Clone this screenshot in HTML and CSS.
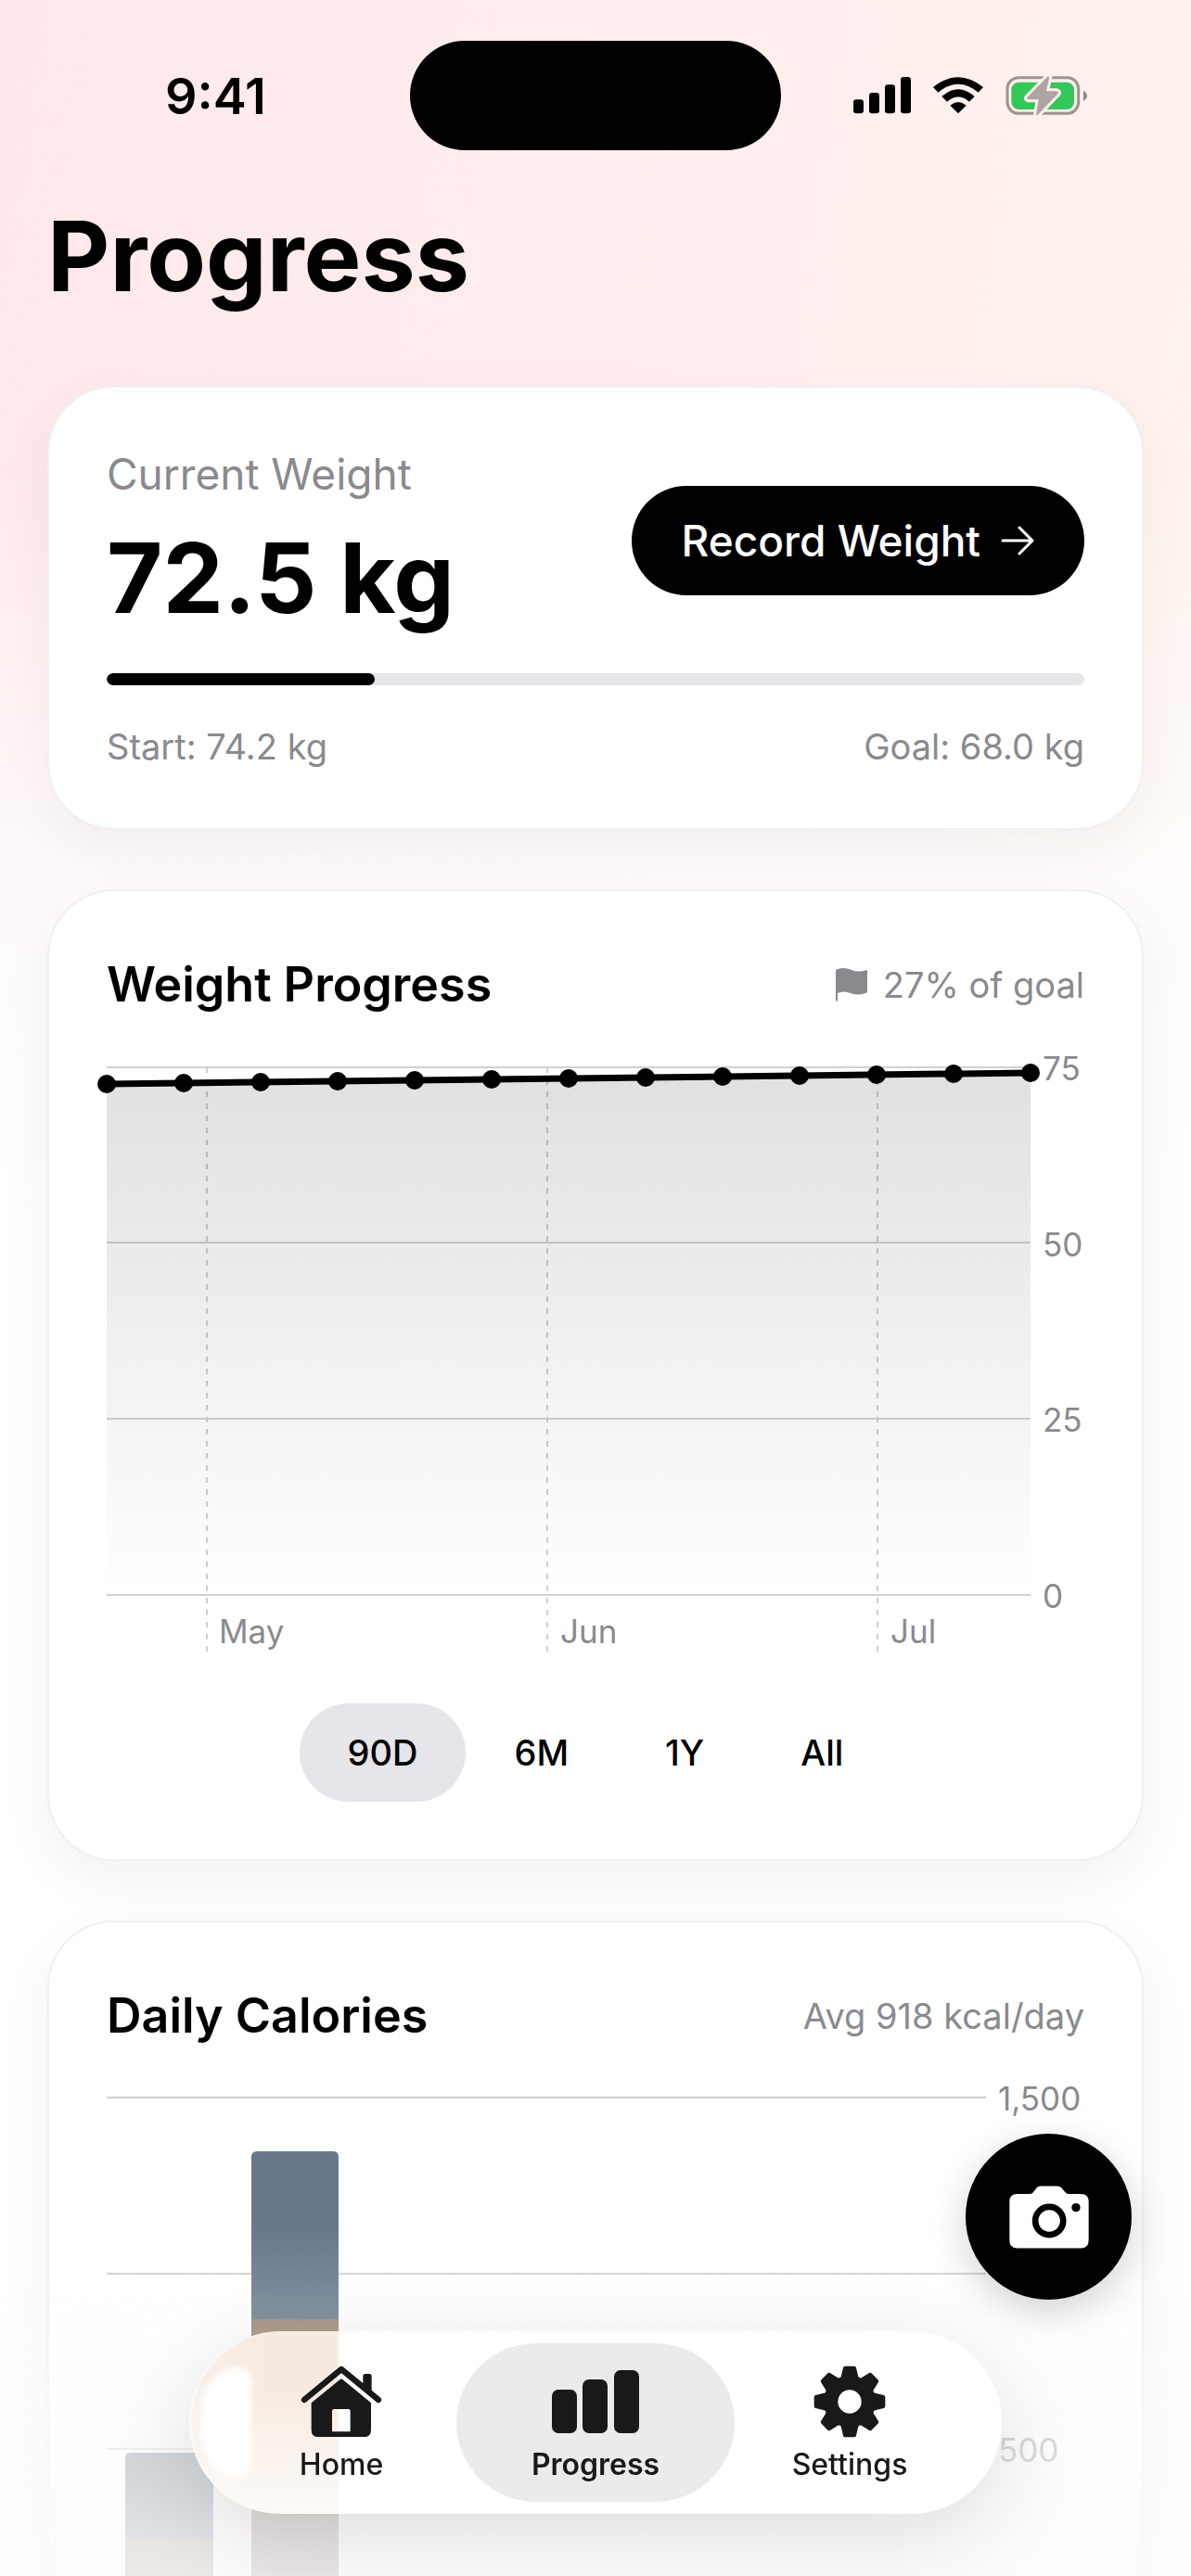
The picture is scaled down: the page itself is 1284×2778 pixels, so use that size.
FILE: index.html
```html
<!DOCTYPE html>
<html lang="en">
<head>
    <meta charset="UTF-8">
    <meta name="viewport" content="width=device-width, initial-scale=1.0">
    <title>Progress</title>
    <link rel="stylesheet" href="styles.css">
</head>
<body>
    <div class="screen">
        <div class="status-bar">
            <span class="status-time">9:41</span>
            <span class="island"></span>
            <div class="status-icons" aria-hidden="true">
                <svg width="62" height="40" viewBox="0 0 186 120">
                    <rect x="0" y="73" width="33" height="45" rx="10"/>
                    <rect x="51" y="51" width="33" height="67" rx="10"/>
                    <rect x="102" y="25" width="33" height="93" rx="10"/>
                    <rect x="153" y="0" width="33" height="118" rx="10"/>
                </svg>
                <svg width="54" height="40" viewBox="0 0 162 120">
                    <path d="M0 33 Q81 -32 162 33 L146 50 Q81 -4 16 50 Z"/>
                    <path d="M28 63 Q81 16 134 63 L117 80 Q81 49 45 80 Z"/>
                    <path d="M55 92 Q81 70 107 92 L81 118 Z"/>
                </svg>
                <svg width="88" height="44" viewBox="0 0 264 132">
                    <rect x="6" y="8" width="230" height="116" rx="36" fill="none" stroke="#a0948f" stroke-width="9"/>
                    <rect x="19" y="23" width="203" height="88" rx="24" fill="#34c759"/>
                    <path d="M252 50 Q264 58 264 67 Q264 76 252 84 Z" fill="#8f8683"/>
                    <path d="M137 4 L70 72 Q67 78 74 79 L107 79 L99 129 L103 130 L170 60 Q173 54 166 52 L132 52 L142 6 Z" fill="#aea5a2" stroke="#fff1ec" stroke-width="18" stroke-linejoin="round"/>
                    <path d="M137 4 L70 72 Q67 78 74 79 L107 79 L99 129 L103 130 L170 60 Q173 54 166 52 L132 52 L142 6 Z" fill="#aea5a2"/>
                </svg>
            </div>
        </div>

        <main class="content">
            <h1 class="page-title">Progress</h1>

            <section class="card">
                <div class="weight-row">
                    <div class="weight-info">
                        <span class="weight-label">Current Weight</span>
                        <strong class="weight-value">72.5 kg</strong>
                    </div>
                    <button type="button" class="record-btn">
                        Record Weight
                        <svg width="36" height="32" viewBox="0 0 36 32" aria-hidden="true">
                            <path d="M2 16 H34 M20 2 L34 16 L20 30" fill="none" stroke="#fff" stroke-width="3" stroke-linecap="round" stroke-linejoin="round"/>
                        </svg>
                    </button>
                </div>
                <div class="goal-bar">
                    <div class="goal-fill" style="width: 27.4%"></div>
                </div>
                <div class="goal-range">
                    <span>Start: 74.2 kg</span>
                    <span>Goal: 68.0 kg</span>
                </div>
            </section>

            <section class="card">
                <div class="card-header">
                    <h2 class="card-title">Weight Progress</h2>
                    <span class="card-note">
                        <svg width="36" height="38" viewBox="0 0 36 38" aria-hidden="true">
                            <path d="M1 3 Q9 -1 18 3 Q25 6 34 3 Q35 3 35 5 V26 Q35 28 33 28 Q25 31 17 28 Q9 25 3 28 V36 Q2 38 1 36 Z" fill="#8a8a8e"/>
                        </svg>
                        27% of goal
                    </span>
                </div>
                <svg class="chart" viewBox="0 0 1054 644" role="img" aria-label="Weight over the last 90 days">
                    <defs>
                        <linearGradient id="areaFill" x1="0" y1="0" x2="0" y2="1">
                            <stop offset="0" stop-color="#000" stop-opacity="0.12"/>
                            <stop offset="1" stop-color="#000" stop-opacity="0"/>
                        </linearGradient>
                    </defs>
                    <path class="grid-line" d="M0 14 H996 M0 203 H996 M0 393 H996 M0 583 H996"/>
                    <path class="month-line" d="M108 14 V644 M475 14 V644 M831 14 V644"/>
                    <path d="M0 32 L996 20 V583 H0 Z" fill="url(#areaFill)"/>
                    <path d="M0 32 L996 20" stroke="#000" stroke-width="7"/>
                    <g>
                        <circle cx="0" cy="32" r="10"/>
                        <circle cx="83" cy="31" r="10"/>
                        <circle cx="166" cy="30" r="10"/>
                        <circle cx="249" cy="29" r="10"/>
                        <circle cx="332" cy="28" r="10"/>
                        <circle cx="415" cy="27" r="10"/>
                        <circle cx="498" cy="26" r="10"/>
                        <circle cx="581" cy="25" r="10"/>
                        <circle cx="664" cy="24" r="10"/>
                        <circle cx="747" cy="23" r="10"/>
                        <circle cx="830" cy="22" r="10"/>
                        <circle cx="913" cy="21" r="10"/>
                        <circle cx="996" cy="20" r="10"/>
                    </g>
                    <g class="axis-text">
                        <text x="1009" y="28">75</text>
                        <text x="1009" y="218">50</text>
                        <text x="1009" y="407">25</text>
                        <text x="1009" y="597">0</text>
                        <text x="121" y="635">May</text>
                        <text x="489" y="635">Jun</text>
                        <text x="845" y="635">Jul</text>
                    </g>
                </svg>
                <div class="range-picker">
                    <button type="button" class="range-btn active">90D</button>
                    <button type="button" class="range-btn">6M</button>
                    <button type="button" class="range-btn">1Y</button>
                    <button type="button" class="range-btn">All</button>
                </div>
            </section>

            <section class="card">
                <div class="card-header">
                    <h2 class="card-title">Daily Calories</h2>
                    <span class="card-note">Avg 918 kcal/day</span>
                </div>
                <svg class="chart" viewBox="0 0 1054 644" role="img" aria-label="Calories per day">
                    <path class="grid-line" d="M0 13 H948 M0 203 H948 M0 392 H948 M0 582 H948"/>
                    <path d="M20 582 V402 Q20 396 26 396 H109 Q115 396 115 402 V582 Z" fill="#67788a"/>
                    <rect x="20" y="487" width="95" height="95" fill="#957f6c"/>
                    <path d="M156 582 V77 Q156 71 162 71 H244 Q250 71 250 77 V582 Z" fill="#67788a"/>
                    <rect x="156" y="252" width="94" height="330" fill="#957f6c"/>
                    <rect x="156" y="400" width="94" height="182" fill="#8f6f70"/>
                    <g class="axis-text">
                        <text x="961" y="27">1,500</text>
                        <text x="961" y="217">1,000</text>
                        <text x="961" y="406">500</text>
                    </g>
                </svg>
            </section>
        </main>

        <div class="bottom-fade"></div>

        <button type="button" class="camera-btn" aria-label="Take photo">
            <svg width="86" height="68" viewBox="0 0 257 202" aria-hidden="true">
                <path d="M26 26 H66 Q74 26 78 20 L88 7 Q93 1 102 1 H154 Q164 1 169 7 L180 20 Q184 26 192 26 H231 Q256 26 256 51 V175 Q256 201 231 201 H26 Q1 201 1 175 V51 Q1 26 26 26 Z" fill="#fff"/>
                <circle cx="129" cy="113" r="45" fill="#fff" stroke="#000" stroke-width="20"/>
                <circle cx="215" cy="70" r="14"/>
            </svg>
        </button>

        <nav class="tab-bar" aria-label="Main">
            <a href="#home" class="tab">
                <svg width="88" height="78" viewBox="0 0 264 234" fill="#191919" aria-hidden="true">
                    <path d="M12 111 L132 12 L252 111" fill="none" stroke="#191919" stroke-width="19" stroke-linecap="round" stroke-linejoin="round"/>
                    <path d="M202 35 Q202 27 210 27 H222 Q230 27 230 35 V92 L202 68 Z"/>
                    <path fill-rule="evenodd" d="M35 121 L128 45 Q132 42 136 45 L228 121 V209 Q228 231 206 231 H57 Q35 231 35 209 Z M108 141 Q102 141 102 147 V214 H161 V147 Q161 141 155 141 Z"/>
                </svg>
                Home
            </a>
            <a href="#progress" class="tab active" aria-current="page">
                <svg width="94" height="78" viewBox="0 0 94 78" fill="#191919" aria-hidden="true">
                    <rect x="0" y="26" width="27" height="47" rx="7"/>
                    <rect x="33" y="15" width="27" height="58" rx="7"/>
                    <rect x="67" y="5" width="27" height="68" rx="7"/>
                </svg>
                Progress
            </a>
            <a href="#settings" class="tab">
                <svg width="78" height="78" viewBox="-117 -117 234 234" aria-hidden="true">
                    <defs>
                        <path id="tooth" d="M-15 -109 H15 L24 -72 H-24 Z" stroke-width="12" stroke-linejoin="round"/>
                    </defs>
                    <g fill="#191919" stroke="#191919">
                        <use href="#tooth"/>
                        <use href="#tooth" transform="rotate(45)"/>
                        <use href="#tooth" transform="rotate(90)"/>
                        <use href="#tooth" transform="rotate(135)"/>
                        <use href="#tooth" transform="rotate(180)"/>
                        <use href="#tooth" transform="rotate(225)"/>
                        <use href="#tooth" transform="rotate(270)"/>
                        <use href="#tooth" transform="rotate(315)"/>
                    </g>
                    <circle r="61" fill="none" stroke="#191919" stroke-width="46"/>
                </svg>
                Settings
            </a>
        </nav>
    </div>
</body>
</html>
```
FILE: styles.css
```css
* {
    box-sizing: border-box;
}
body {
    margin: 0;
    font-family: Inter, "Liberation Sans", sans-serif;
    color: #000;
    background: #fff;
}
.screen {
    height: 100vh;
    overflow: hidden;
    background:
        linear-gradient(180deg, rgba(255,255,255,0) 0, rgba(255,255,255,0) 500px, rgba(255,255,255,0.8) 940px, #fff 1300px),
        linear-gradient(100deg, #ffe8eb 0, #ffeeed 50%, #fff6ed 95%);
}
.status-bar {
    display: grid;
    grid-template-columns: 1fr 400px 1fr;
    align-items: center;
    padding: 44px 0 50px;
}
.status-time {
    padding-left: 178px;
    font-size: 54px;
    font-weight: 600;
}
.island {
    height: 118px;
    border-radius: 59px;
    background: #000;
}
.status-icons {
    display: flex;
    align-items: center;
    justify-content: flex-end;
    gap: 24px;
    padding-right: 112px;
}
.content {
    display: flex;
    flex-direction: column;
    gap: 64px;
    padding: 0 51px;
}
.page-title {
    margin: 0 0 12px;
    font-size: 104px;
    line-height: 128px;
    font-weight: 700;
}
.card {
    padding: 62px;
    border: 2px solid #f0f0f0;
    border-radius: 72px;
    background: #fff;
    background-clip: padding-box;
    box-shadow: 0 20px 60px rgba(0,0,0,0.05);
}
.weight-row {
    display: flex;
    align-items: center;
    justify-content: space-between;
}
.weight-info {
    display: flex;
    flex-direction: column;
    gap: 18px;
}
.weight-label {
    font-size: 46px;
    line-height: 62px;
    color: #8a8a8e;
}
.weight-value {
    font-size: 104px;
    line-height: 126px;
    font-weight: 700;
}
.record-btn {
    display: flex;
    align-items: center;
    gap: 22px;
    height: 118px;
    padding: 0 54px;
    border: none;
    border-radius: 59px;
    background: #000;
    color: #fff;
    font-family: inherit;
    font-size: 46px;
    font-weight: 500;
    cursor: pointer;
}
.goal-bar {
    height: 13px;
    margin: 40px 0;
    border-radius: 7px;
    background: #e5e5ea;
    overflow: hidden;
}
.goal-fill {
    height: 100%;
    border-radius: 7px;
    background: #000;
}
.goal-range {
    display: flex;
    justify-content: space-between;
    font-size: 38px;
    line-height: 52px;
    color: #8a8a8e;
}
.card-header {
    display: flex;
    align-items: center;
    justify-content: space-between;
    margin-bottom: 36px;
}
.card-title {
    margin: 0;
    font-size: 52px;
    line-height: 78px;
    font-weight: 600;
}
.card-note {
    display: flex;
    align-items: center;
    gap: 16px;
    font-size: 38px;
    color: #8a8a8e;
}
.chart {
    display: block;
    width: 100%;
    overflow: visible;
}
.grid-line {
    stroke: #d1d1d3;
    stroke-width: 2;
}
.month-line {
    stroke: #cfcfd1;
    stroke-width: 2;
    stroke-dasharray: 6 7;
}
.axis-text {
    font-size: 35px;
    fill: #8a8a8e;
}
.range-picker {
    display: flex;
    justify-content: center;
    margin-top: 56px;
}
.range-btn {
    height: 106px;
    padding: 0 52px;
    border: none;
    border-radius: 53px;
    background: none;
    color: #000;
    font-family: inherit;
    font-size: 38px;
    font-weight: 500;
    cursor: pointer;
}
.range-btn.active {
    background: #e5e5ea;
}
.bottom-fade {
    position: fixed;
    left: 0;
    right: 0;
    bottom: 0;
    height: 378px;
    background: linear-gradient(180deg, rgba(252,252,252,0) 0, rgba(252,252,252,0.2) 100px, rgba(252,252,252,0.7) 240px, rgba(252,252,252,0.85) 100%);
    pointer-events: none;
}
.camera-btn {
    position: fixed;
    right: 64px;
    bottom: 298px;
    display: flex;
    align-items: center;
    justify-content: center;
    width: 179px;
    height: 179px;
    padding: 0;
    border: none;
    border-radius: 50%;
    background: #000;
    box-shadow: 0 12px 40px rgba(0,0,0,0.18);
    cursor: pointer;
}
.tab-bar {
    position: fixed;
    left: 50%;
    bottom: 67px;
    transform: translateX(-50%);
    display: flex;
    padding: 13px 14px;
    border-radius: 99px;
    background:
        linear-gradient(180deg, rgba(255,255,255,0) 0, rgba(255,255,255,0) 30%, rgba(255,255,255,0.75) 100%),
        linear-gradient(90deg, #faf0ea 0, #f7ebe1 80px, #f7ebe1 159px, #fff 163px);
    box-shadow: 0 24px 90px rgba(0,0,0,0.12), inset 2px 0 2px #fffaf4;
}
/* glass highlight at the left end */
.tab-bar::before {
    content: "";
    position: absolute;
    left: 13px;
    top: 39px;
    width: 54px;
    height: 118px;
    border-radius: 100% 30% 30% 100% / 50% 20% 20% 50%;
    background: #fff;
    filter: blur(3px);
}
.tab {
    display: flex;
    flex-direction: column;
    align-items: center;
    width: 300px;
    height: 171px;
    padding-top: 24px;
    border-radius: 86px;
    color: #191919;
    font-size: 32px;
    line-height: 58px;
    font-weight: 500;
    text-decoration: none;
}
.tab + .tab {
    margin-left: -26px;
}
.tab.active {
    background: #ebebeb;
    font-weight: 600;
}
```
